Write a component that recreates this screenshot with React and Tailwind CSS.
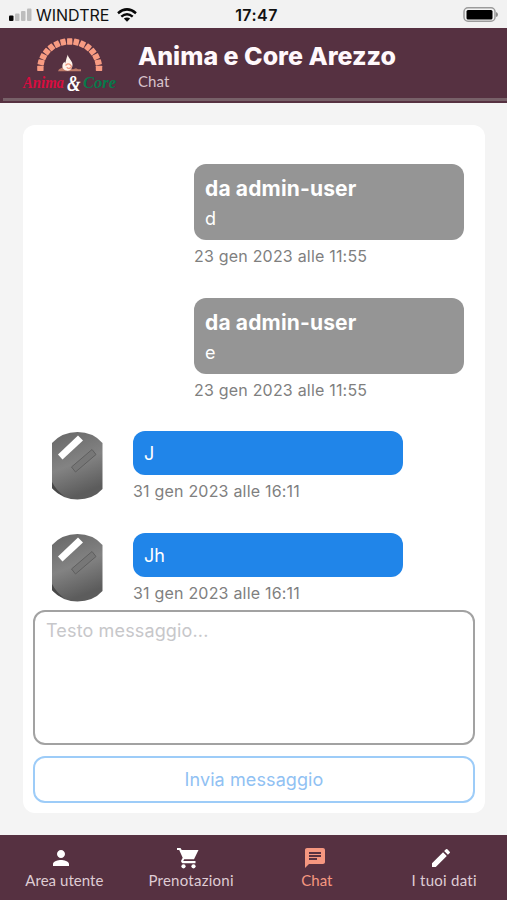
import React from 'react'
import { MdPerson, MdChat, MdEdit } from 'react-icons/md'

const messages = [
  { id: 1, from: 'da admin-user', text: 'd', date: '23 gen 2023 alle 11:55' },
  { id: 2, from: 'da admin-user', text: 'e', date: '23 gen 2023 alle 11:55' },
  { id: 3, text: 'J', date: '31 gen 2023 alle 16:11' },
  { id: 4, text: 'Jh', date: '31 gen 2023 alle 16:11' },
]

const tabs = [
  { label: 'Area utente', icon: MdPerson, shift: 'pl-0.5', iconShift: '-translate-x-[3px]', tracking: 'tracking-[0.05px]' },
  { label: 'Prenotazioni', icon: CartIcon, shift: 'pl-0.5', iconShift: '-translate-x-[3px]', tracking: 'tracking-[0.25px]' },
  { label: 'Chat', icon: MdChat, active: true, shift: '', iconShift: '-translate-x-[2px]', tracking: 'tracking-[0.05px]' },
  { label: 'I tuoi dati', icon: MdEdit, shift: 'pl-px', iconShift: '-translate-x-[3px]', tracking: 'tracking-[0.25px]' },
]

export default function App() {
  return (
    <div className="w-[507px] h-[900px] flex flex-col overflow-hidden bg-[#f4f4f4] font-['Inter','Liberation_Sans',sans-serif]">
      <StatusBar />
      <Header />
      <main className="flex-1 px-[23px] pt-[22px] pb-[22px] flex">
        <div className="w-[462px] bg-white rounded-xl px-2.5 pt-[39px] pb-2.5 flex flex-col">
          <div className="flex flex-col gap-6">
            {messages.map((m) => <Message key={m.id} {...m} />)}
          </div>
          <textarea
            placeholder="Testo messaggio..."
            className="block h-[135px] w-[442px] shrink-0 resize-none rounded-xl border-2 border-[#a2a2a2] px-[11px] pt-[7px] text-[18px] leading-6 tracking-[0.14px] placeholder:text-[#c7c7ca]"
          />
          <button className="mt-[11px] h-[47px] w-[442px] shrink-0 rounded-xl border-2 border-[#9dccf8] text-[18px] tracking-[0.1px] text-[#90c1f3]">
            Invia messaggio
          </button>
        </div>
      </main>
      <TabBar />
    </div>
  )
}

function StatusBar() {
  return (
    <div className="h-7 shrink-0 bg-[#f2f2f2] px-[9px] grid grid-cols-3 items-center text-[#111]">
      <div className="flex items-center pt-px">
        <svg width="23" height="14" viewBox="0 0 23 14">
          <rect x="0" y="7.5" width="4.5" height="5.5" rx="1" fill="#050505" />
          <rect x="6" y="5.5" width="4.5" height="7.5" rx="1" fill="#bdbdbd" />
          <rect x="12" y="3" width="4.5" height="10" rx="1" fill="#bdbdbd" />
          <rect x="18" y="0.5" width="4.5" height="12.5" rx="1" fill="#bdbdbd" />
        </svg>
        <span className="ml-[4px] w-[74px] text-[16px] whitespace-nowrap">WINDTRE</span>
        <svg className="ml-[7px]" width="20" height="14" viewBox="0 0 20 14" fill="none" stroke="#080808" strokeWidth="2.5">
          <path d="M1 5.2Q10 -2.4 19 5.2" />
          <path d="M4.3 8.6Q10 3.8 15.7 8.6" />
          <path d="M10 13.8 6.8 10.6Q10 8.2 13.2 10.6Z" fill="#080808" stroke="none" />
        </svg>
      </div>
      <div className="pt-px pl-1.5 text-center text-[16px] font-semibold tracking-[0.45px]">17:47</div>
      <svg className="justify-self-end" width="36" height="16" viewBox="0 0 36 16">
        <rect x="2" y="1.75" width="31" height="13.5" rx="4" fill="#f2f2f2" stroke="#9b9b9b" strokeWidth="1.5" />
        <rect x="4.5" y="4" width="26" height="9.5" rx="1.5" fill="#000" />
        <path d="M34 6q2 .5 2 2.5t-2 2.5z" fill="#8b8b8b" />
      </svg>
    </div>
  )
}

function Header() {
  return (
    <header className="h-[75px] shrink-0 bg-[#563141] flex flex-col">
      <div className="h-[70px] flex">
        <Logo />
        <div className="pt-[13px] pl-[18px]">
          <h1 className="text-[25px] leading-[30px] font-extrabold whitespace-nowrap text-[#fff8fb]">Anima e Core Arezzo</h1>
          <p className="text-[15px] leading-[21px] tracking-[0.1px] text-[#d8c3cc] font-['Lato',sans-serif]">Chat</p>
        </div>
      </div>
      <div className="ml-[3px] h-[3px] bg-[#776068]" />
    </header>
  )
}

// brick arch with a fire over the name
function Logo() {
  const bricks = Array.from({ length: 15 }, (_, i) => -90 + (i * 180) / 14)
  return (
    <svg className="shrink-0" width="120" height="70" viewBox="0 28 120 70">
      {bricks.map((a) => {
        const rad = (a * Math.PI) / 180
        const x = 69.7 + 29.3 * Math.sin(rad)
        const y = 68.3 - 26.8 * Math.cos(rad)
        return <rect key={a} x="-2.65" y="-3.2" width="5.3" height="6.4" rx="0.6" fill="#f79b82" transform={`translate(${x} ${y}) rotate(${a})`} />
      })}
      <path d="M58 71.2h23v-2h-3l-2-1-3 1-10-2-4 2z" fill="#c07c69" />
      <path d="M68 54.5c-.6 3 4.2 5.7 4.5 9.8.2 3.6-1.7 6.4-4.7 6.4-3.6 0-6-2.4-5.3-5.6.3-1.6 1.2-2.5 2-3.3l.6 1.6c1.2-2.6 1-5.6 2.9-8.9z" fill="#fff3eb" />
      <path d="M65.5 65.5q2.5-3 5-.5t-1.5 3.5q-2 0-2-1.5" fill="none" stroke="#ef997f" strokeWidth="1.3" />
      <text x="23" y="88" textLength="41" lengthAdjust="spacingAndGlyphs" fontSize="16" fill="#d90c3f" className="italic font-semibold font-['Liberation_Serif',cursive]">Anima</text>
      <text x="67" y="90.5" textLength="13.5" lengthAdjust="spacingAndGlyphs" fontSize="23" fill="#fff" className="italic font-bold font-['Liberation_Serif',cursive]">&amp;</text>
      <text x="83" y="88" textLength="33" lengthAdjust="spacingAndGlyphs" fontSize="17" fill="#08794a" className="italic font-semibold font-['Liberation_Serif',cursive]">Core</text>
    </svg>
  )
}

function Message({ from, text, date }) {
  return (
    <div className={`flex ${from ? 'pl-[161px]' : 'pl-[18px]'}`}>
      {!from && <Avatar />}
      <div>
        <div className={`w-[270px] rounded-xl px-[11px] text-white ${from ? 'h-[76px] pt-[11px] bg-[#959595]' : 'h-11 pt-[11px] bg-[#2085e9]'}`}>
          {from && <p className="mb-1 text-[21px] leading-7 font-bold tracking-[0.15px]">{from}</p>}
          <p className="text-[18px] leading-6">{text}</p>
        </div>
        <p className="h-[33.5px] pt-[5px] text-[16px] leading-[22px] tracking-[0.2px] text-[#7f7f7f]">{date}</p>
      </div>
    </div>
  )
}

function Avatar() {
  return (
    <svg className="mr-[30px] shrink-0" width="52" height="70" viewBox="0 0 52 70">
      <defs>
        <linearGradient id="lens" x1="0" y1="0" x2="0.3" y2="1">
          <stop offset="0" stopColor="#666" />
          <stop offset="0.55" stopColor="#838383" />
          <stop offset="1" stopColor="#5c5c5c" />
        </linearGradient>
      </defs>
      <path d="M1 12Q11 1 26.500 1T51.500 12V58Q42 68.500 26.500 68.500T1 57Z" fill="url(#lens)" />
      <path d="M1 51q4 8 12 14Q5 62 1 57z" fill="#484848" />
      <path d="M7 23.500 27 4.500l5 5L11.500 28.500z" fill="#fff" />
      <path d="M20.500 36 41 18.500l4 5L24.500 41z" fill="#777" stroke="#5f5f5f" />
    </svg>
  )
}

function CartIcon({ className }) {
  return (
    <svg className={className} viewBox="0 0 24 24" fill="currentColor">
      <path d="M1 2h3.500l1.200 2H22.500L18 13.200H8.200L7.200 15H19.500v2.200H6.500q-2-.7-1.300-2.600L6.700 11.800 3.200 4H1z" />
      <circle cx="7.500" cy="20.300" r="2.100" />
      <circle cx="17.500" cy="20.300" r="2.100" />
    </svg>
  )
}

function TabBar() {
  return (
    <nav className="h-[65px] shrink-0 bg-[#563141] grid grid-cols-4">
      {tabs.map((t) => {
        const Icon = t.icon
        return (
          <a key={t.label} href="#" className={`flex flex-col items-center pt-[11px] ${t.shift} ${t.active ? 'text-[#f59780]' : 'text-[#dfccd4]'}`}>
            <Icon className={`size-6 ${t.iconShift} ${t.active ? '' : 'text-white'}`} />
            <span className={`text-[15px] leading-5 font-['Lato',sans-serif] ${t.tracking}`}>{t.label}</span>
          </a>
        )
      })}
    </nav>
  )
}
